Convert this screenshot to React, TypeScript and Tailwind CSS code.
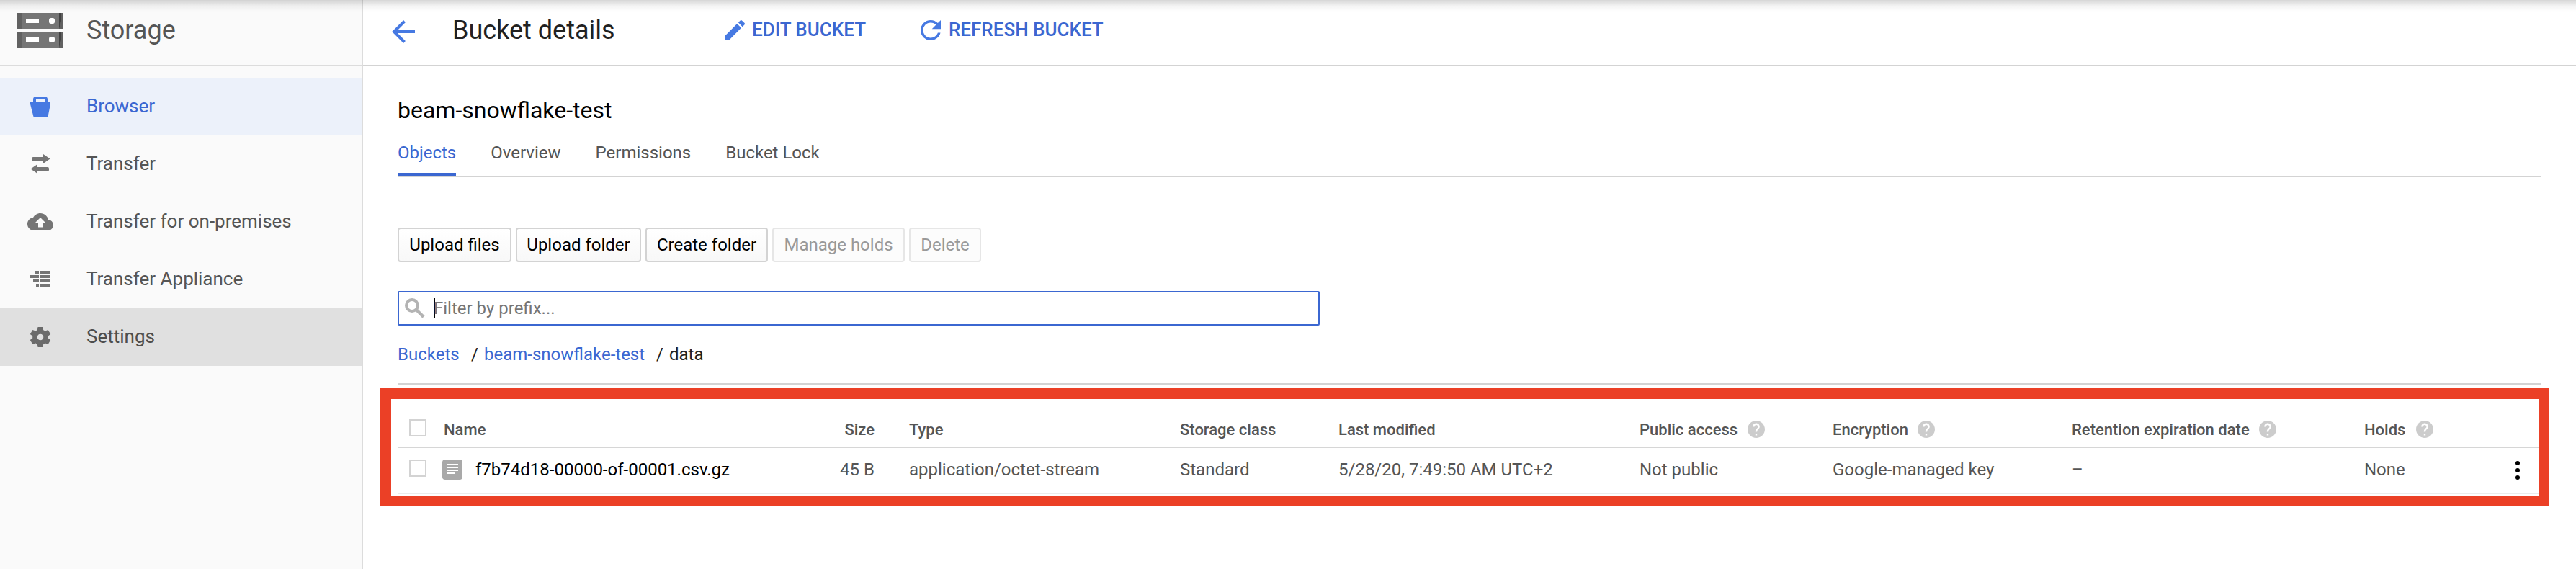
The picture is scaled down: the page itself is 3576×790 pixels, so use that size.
import type { ReactNode } from "react";

function StorageLogo() {
  return (
    <svg width="64" height="48" viewBox="0 0 64 48" className="block shrink-0">
      {[0, 26].map((y) => (
        <g key={y} transform={`translate(0 ${y})`}>
          <rect width="64" height="22" fill="#757575" />
          <rect width="6" height="22" fill="#616161" />
          <path d="M58 0h3.500L58.500 22H58z" fill="#424242" />
          <path d="M61.500 0H64v22h-5.500z" fill="#616161" />
          <rect x="12" y="8" width="18" height="6" fill="#fff" />
          <rect x="44" y="7" width="8" height="8" rx="3" fill="#fff" />
        </g>
      ))}
    </svg>
  );
}

function BucketIcon() {
  return (
    <svg width="36" height="36" viewBox="0 0 36 36" fill="#4679e2">
      <path
        fillRule="evenodd"
        d="M4 12h4V8a4 4 0 0 1 4-4h12a4 4 0 0 1 4 4v4h4v2.500L28.500 32h-20L4 14.500zM12 8v4h12V8z"
      />
    </svg>
  );
}

function TransferIcon() {
  return (
    <svg width="36" height="36" viewBox="0 0 36 36" fill="#757575">
      <path d="M6 10a2 2 0 0 1 2-2h14V4l9.500 6.500L22 17v-3H8a2 2 0 0 1-2-2z" />
      <path d="M30 24a2 2 0 0 0-2-2H14v-4L4.500 24.500 14 31v-3h14a2 2 0 0 0 2-2z" />
    </svg>
  );
}

function CloudIcon() {
  return (
    <svg width="36" height="36" viewBox="0 0 24 24" fill="#757575">
      <path d="M19.350 10.040C18.670 6.590 15.640 4 12 4 9.110 4 6.600 5.640 5.350 8.040 2.340 8.360 0 10.910 0 14c0 3.310 2.690 6 6 6h13c2.760 0 5-2.240 5-5 0-2.640-2.050-4.780-4.650-4.960zM14 13v4h-4v-4H7l5-5 5 5h-3z" />
    </svg>
  );
}

function ApplianceIcon() {
  return (
    <svg width="36" height="36" viewBox="0 0 36 36" fill="#757575">
      <path d="M10 6h6v4h-6zM18 6h14v4H18zM4 12h12v4H4zM18 12h14v4H18zM8 18h8v4H8zM18 18h14v4H18zM12 24h4v4h-4zM18 24h14v4H18z" />
    </svg>
  );
}

function GearIcon() {
  return (
    <svg width="36" height="36" viewBox="0 0 36 36" fill="#6b6b6b">
      <path
        fillRule="evenodd"
        d="M14.500 4h7l.7 4.200 2.500 1.400 4-1.600 3.500 6-3.400 2.600v2.800l3.400 2.600-3.500 6-4-1.600-2.500 1.400-.7 4.200h-7l-.7-4.200-2.500-1.400-4 1.600-3.500-6 3.400-2.600v-2.800L3.800 14l3.500-6 4 1.600 2.500-1.400zM18 13.700a4.300 4.300 0 1 0 0 8.600 4.300 4.300 0 0 0 0-8.600z"
      />
    </svg>
  );
}

function HelpIcon() {
  return (
    <svg width="24" height="24" viewBox="2 2 20 20" fill="#cccccc" className="block">
      <path d="M12 2C6.480 2 2 6.480 2 12s4.480 10 10 10 10-4.480 10-10S17.520 2 12 2zm1 17h-2v-2h2v2zm2.070-7.750l-.9.920C13.450 12.900 13 13.500 13 15h-2v-.5c0-1.100.45-2.100 1.170-2.830l1.240-1.260c.37-.36.59-.86.59-1.410 0-1.100-.9-2-2-2s-2 .9-2 2H8c0-2.210 1.790-4 4-4s4 1.790 4 4c0 .88-.36 1.680-.93 2.250z" />
    </svg>
  );
}

function NavItem({
  icon,
  label,
  row = "",
  text = "text-[#555555]",
}: {
  icon: ReactNode;
  label: string;
  row?: string;
  text?: string;
}) {
  return (
    <a className={`flex h-20 items-center pl-[38px] ${row}`}>
      <span className="w-[82px]">{icon}</span>
      <span className={`-mt-0.5 whitespace-nowrap text-[26px] leading-8 ${text}`}>{label}</span>
    </a>
  );
}

function ToolButton({ label, box, disabled }: { label: string; box: string; disabled?: boolean }) {
  return (
    <button
      className={`h-12 whitespace-nowrap rounded-[4px] border-2 text-center text-2xl leading-[44px] ${box} ${
        disabled
          ? "border-[#e6e6e6] bg-[#fcfcfc] text-[#999999]"
          : "border-[#d3d3d3] bg-linear-to-b from-white to-[#f8f8f8] text-black"
      }`}
    >
      {label}
    </button>
  );
}

function Checkbox() {
  return <span className="block size-6 border-2 border-[#d3d3d3] bg-white" />;
}

const columns =
  "grid grid-cols-[16px_48px_598px_48px_376px_220px_418px_268px_332px_406px_209px_1fr]";

const headers = [
  { label: "Type" },
  { label: "Storage class" },
  { label: "Last modified" },
  { label: "Public access", help: "w-[150px]" },
  { label: "Encryption", help: "w-[118px]" },
  { label: "Retention expiration date", help: "w-[260px]" },
  { label: "Holds", help: "w-[72px]" },
];

const cells = [
  "application/octet-stream",
  "Standard",
  "5/28/20, 7:49:50 AM UTC+2",
  "Not public",
  "Google-managed key",
  "–",
  "None",
];

export default function App() {
  return (
    <div className="relative flex h-[790px] w-[3576px] overflow-hidden bg-white font-['Roboto',sans-serif]">
      <aside className="w-[504px] shrink-0 border-r-2 border-[#dcdcdc] bg-[#fafafa]">
        <div className="flex h-[92px] items-start border-b-2 border-[#dcdcdc] pl-6 pt-[18px]">
          <StorageLogo />
          <span className="ml-8 mt-px text-[36px] leading-[46px] text-[#555555]">Storage</span>
        </div>
        <nav className="pt-4">
          <NavItem icon={<BucketIcon />} label="Browser" row="bg-[#ecf1fa]" text="text-[#3b67d1]" />
          <NavItem icon={<TransferIcon />} label="Transfer" />
          <NavItem icon={<CloudIcon />} label="Transfer for on-premises" />
          <NavItem icon={<ApplianceIcon />} label="Transfer Appliance" />
          <NavItem icon={<GearIcon />} label="Settings" row="bg-[#e0e0e0]" text="text-[#4e4e4e]" />
        </nav>
      </aside>

      <main className="min-w-0 flex-1">
        <header className="flex h-[92px] items-start border-b-2 border-[#d3d3d3] pl-[40px]">
          <svg width="32" height="32" viewBox="0 0 32 32" fill="none" stroke="#4679e2" strokeWidth="4" className="mt-7 shrink-0">
            <path d="M17.500 1.500 3 16l14.500 14.500M2 16h30" />
          </svg>
          <h1 className="ml-[52px] mt-[19px] w-[378px] whitespace-nowrap text-[36px] leading-[46px] text-[#212121]">
            Bucket details
          </h1>
          <svg width="28" height="28" viewBox="3 3 18 18" fill="#4679e2" className="mt-7 shrink-0">
            <path d="M3 17.250V21h3.750L17.810 9.940l-3.750-3.750L3 17.250zM20.710 7.040c.39-.39.39-1.020 0-1.410l-2.340-2.340c-.39-.39-1.020-.39-1.410 0l-1.830 1.830 3.750 3.750 1.830-1.830z" />
          </svg>
          <span className="ml-[10px] mt-6 w-[234px] whitespace-nowrap text-[26px] font-medium leading-[34px] text-[#3b67d1]">
            EDIT BUCKET
          </span>
          <svg width="28" height="28" viewBox="4 4 16 16" fill="#4679e2" className="mt-7 shrink-0">
            <path d="M17.650 6.350C16.200 4.900 14.210 4 12 4c-4.420 0-7.990 3.580-7.990 8s3.570 8 7.990 8c3.730 0 6.840-2.550 7.730-6h-2.080c-.82 2.330-3.040 4-5.650 4-3.310 0-6-2.690-6-6s2.690-6 6-6c1.660 0 3.140.69 4.220 1.780L13 11h7V4l-2.350 2.350z" />
          </svg>
          <span className="ml-[11px] mt-6 whitespace-nowrap text-[26px] font-medium leading-[34px] text-[#3b67d1]">
            REFRESH BUCKET
          </span>
        </header>

        <div className="px-12">
          <h2 className="pt-[41px] text-[32px] leading-[40px] text-black">beam-snowflake-test</h2>
          <nav className="mt-[19px] flex h-[54px] gap-12 border-b-2 border-[#d3d3d3] text-2xl leading-[40px] text-[#555555]">
            <span className="h-[52px] border-b-4 border-[#3b67d1] text-[#3b67d1]">Objects</span>
            <span>Overview</span>
            <span>Permissions</span>
            <span>Bucket Lock</span>
          </nav>

          <div className="mt-[70px] flex gap-1.5">
            <ToolButton label="Upload files" box="w-[158px]" />
            <ToolButton label="Upload folder" box="w-[174px]" />
            <ToolButton label="Create folder" box="w-[170px]" />
            <ToolButton label="Manage holds" box="w-[184px]" disabled />
            <ToolButton label="Delete" box="w-[100px]" disabled />
          </div>

          <div className="mt-10 flex h-12 w-[1280px] items-start rounded-[2px] border-2 border-[#3b67d1] pl-2 pt-2">
            <svg width="28" height="28" viewBox="0 0 28 28" fill="none" stroke="#b3b3b3" className="shrink-0">
              <circle cx="10" cy="10" r="8" strokeWidth="4" />
              <path d="M16 16l10 10" strokeWidth="4.500" />
            </svg>
            <span className="ml-3 h-7 w-0.5 bg-black" />
            <span className="-ml-0.5 text-2xl leading-7 text-[#757575]">Filter by prefix...</span>
          </div>

          <div className="mt-[26px] flex h-7 text-2xl leading-7 text-[#212121]">
            <span className="w-[102px] text-[#3b67d1]">Buckets</span>
            <span className="w-[18px]">/</span>
            <span className="w-[239px] text-[#3b67d1]">beam-snowflake-test</span>
            <span className="w-[18px]">/</span>
            <span>data</span>
          </div>
          <div className="mt-[26px] h-0.5 bg-[#d3d3d3]" />
        </div>

        <section className="ml-6 mt-[5px] h-[164px] w-[3011px] whitespace-nowrap border-[15px] border-[#eb4026] pl-[9px]">
          <div className={`${columns} h-[68px] border-b-2 border-[#d6d6d6] text-[22px] font-medium leading-[30px] text-[#555555]`}>
            <span />
            <span className="pt-7">
              <Checkbox />
            </span>
            <span className="flex pt-7">
              <span>Name</span>
              <span className="ml-auto">Size</span>
            </span>
            <span />
            {headers.map((h) => (
              <span key={h.label} className="flex items-start pt-7">
                <span className={`shrink-0 ${h.help ?? ""}`}>{h.label}</span>
                {h.help && (
                  <span className="mt-[2px]">
                    <HelpIcon />
                  </span>
                )}
              </span>
            ))}
          </div>
          <div className={`${columns} h-16 border-b-2 border-[#ececec] text-2xl leading-7 text-[#555555]`}>
            <span />
            <span className="pt-4">
              <Checkbox />
            </span>
            <span className="flex items-start pt-4">
              <svg width="28" height="28" viewBox="0 0 28 28" className="-ml-0.5 block">
                <rect width="28" height="28" rx="4" fill="#a9a9a9" />
                <path d="M6 7h16M6 11h16M6 15h16M6 19h12" stroke="#fff" strokeWidth="2" />
              </svg>
              <span className="ml-[18px] text-black">f7b74d18-00000-of-00001.csv.gz</span>
              <span className="ml-auto">45 B</span>
            </span>
            <span />
            {cells.map((c) => (
              <span key={c} className="pt-4">
                {c}
              </span>
            ))}
            <svg width="8" height="28" viewBox="0 0 8 28" className="mt-[17px] block" fill="#000">
              <circle cx="4" cy="4" r="3" />
              <circle cx="4" cy="14" r="3" />
              <circle cx="4" cy="24" r="3" />
            </svg>
          </div>
        </section>
      </main>

      <div className="pointer-events-none absolute inset-x-0 top-0 h-4 bg-linear-to-b from-black/16 via-black/5 to-transparent" />
    </div>
  );
}
